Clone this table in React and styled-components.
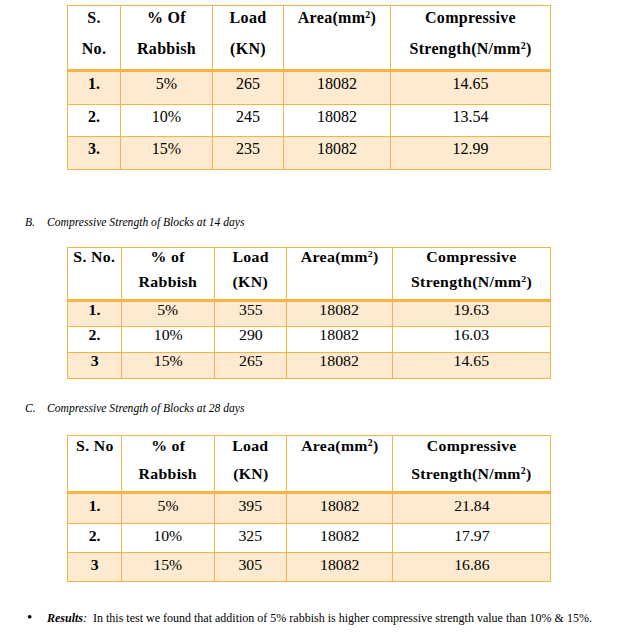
import styled, { createGlobalStyle } from "styled-components";

const BORDER = "#f6b444";
const SHADE = "#fdead0";

const GlobalStyle = createGlobalStyle`
  html, body {
    margin: 0;
    padding: 0;
    background: #ffffff;
  }
  body {
    font-family: "Liberation Serif", "Times New Roman", serif;
    color: #000000;
  }
`;

const Page = styled.div`
  width: 631px;
  padding-top: 5px;
  display: flex;
  flex-direction: column;
`;

const Grid = styled.div`
  display: grid;
  grid-template-columns: ${(p) => p.$cols};
  grid-template-rows: ${(p) => p.$rows};
  width: max-content;
  margin-left: 67px;
  margin-top: ${(p) => p.$top || 0}px;
  border-top: 1px solid ${BORDER};
  border-left: 1px solid ${BORDER};
`;

const Cell = styled.div`
  box-sizing: border-box;
  border-right: 1px solid ${BORDER};
  border-bottom: 1px solid ${BORDER};
  background: ${(p) => (p.$shade ? SHADE : "#ffffff")};
  text-align: center;
  padding-top: ${(p) => p.$pad}px;
  font-size: ${(p) => p.$size}px;
  font-weight: ${(p) => (p.$bold ? 700 : 400)};
  line-height: ${(p) => p.$lh}px;
  white-space: nowrap;
`;

const HeadCell = styled(Cell)`
  font-weight: 700;
  border-bottom: 3px solid ${BORDER};
  letter-spacing: 0.3px;
`;

const HeadLine = styled.div`
  height: ${(p) => p.$h}px;
`;

const Stretch = styled.span`
  display: inline-block;
  transform: scaleX(${(p) => p.$scale});
`;

const Sup = styled.sup`
  font-size: 0.62em;
  line-height: 0;
  vertical-align: 0.55em;
`;

const Caption = styled.div`
  display: flex;
  margin-top: ${(p) => p.$top}px;
  padding-left: 25px;
  font-size: 11.6px;
  font-style: italic;
  line-height: 14px;
`;

const Label = styled.span`
  width: 22px;
`;

const Results = styled.div`
  display: flex;
  align-items: baseline;
  margin-top: 28px;
  padding-left: 27px;
  font-size: 12px;
  line-height: 14px;
`;

const Bullet = styled.span`
  width: 20px;
  font-size: 15px;
  line-height: 14px;
`;

const Strong = styled.span`
  font-weight: 700;
  font-style: italic;
`;

const area = (
  <>
    Area(mm<Sup>2</Sup>)
  </>
);
const strength = (
  <>
    Strength(N/mm<Sup>2</Sup>)
  </>
);

const tables = [
  {
    top: 0,
    cols: "53px 92px 71px 107px 160px",
    rows: "66px 33px 32px 33px",
    size: 16,
    scale: 1,
    lh: 20,
    lineH: 31,
    headPad: 2,
    rowPad: 2,
    head: [["S.", "No."], ["% Of", "Rabbish"], ["Load", "(KN)"], [area], ["Compressive", strength]],
    body: [
      ["1.", "5%", "265", "18082", "14.65"],
      ["2.", "10%", "245", "18082", "13.54"],
      ["3.", "15%", "235", "18082", "12.99"],
    ],
  },
  {
    caption: ["B.", "Compressive Strength of Blocks at 14 days"],
    capTop: 46,
    top: 17,
    cols: "54px 93px 72px 106px 158px",
    rows: "54px 25px 26px 26px",
    size: 14.5,
    scale: 1.09,
    lh: 16,
    lineH: 25,
    headPad: 1,
    rowPad: 0,
    head: [["S. No."], ["% of", "Rabbish"], ["Load", "(KN)"], [area], ["Compressive", strength]],
    body: [
      ["1.", "5%", "355", "18082", "19.63"],
      ["2.", "10%", "290", "18082", "16.03"],
      ["3", "15%", "265", "18082", "14.65"],
    ],
  },
  {
    caption: ["C.", "Compressive Strength of Blocks at 28 days"],
    capTop: 23,
    top: 19,
    cols: "54px 93px 72px 106px 158px",
    rows: "58px 30px 29px 29px",
    size: 15,
    scale: 1.05,
    lh: 16,
    lineH: 28,
    headPad: 2,
    rowPad: 4,
    head: [["S. No"], ["% of", "Rabbish"], ["Load", "(KN)"], [area], ["Compressive", strength]],
    body: [
      ["1.", "5%", "395", "18082", "21.84"],
      ["2.", "10%", "325", "18082", "17.97"],
      ["3", "15%", "305", "18082", "16.86"],
    ],
  },
];

function DataTable({ t }) {
  return (
    <Grid $cols={t.cols} $rows={t.rows} $top={t.top}>
      {t.head.map((lines, i) => (
        <HeadCell key={"h" + i} $pad={t.headPad} $size={t.size} $lh={t.lh}>
          {lines.map((line, j) => (
            <HeadLine key={j} $h={t.lineH}>
              <Stretch $scale={t.scale}>{line}</Stretch>
            </HeadLine>
          ))}
        </HeadCell>
      ))}
      {t.body.map((row, r) =>
        row.map((val, c) => (
          <Cell
            key={r + "-" + c}
            $shade={r % 2 === 0}
            $bold={c === 0}
            $pad={t.rowPad}
            $size={t.size}
            $lh={t.lh}
          >
            <Stretch $scale={t.scale}>{val}</Stretch>
          </Cell>
        ))
      )}
    </Grid>
  );
}

export default function App() {
  return (
    <Page>
      <GlobalStyle />
      {tables.map((t, i) => (
        <div key={i}>
          {t.caption && (
            <Caption $top={t.capTop}>
              <Label>{t.caption[0]}</Label>
              <span>{t.caption[1]}</span>
            </Caption>
          )}
          <DataTable t={t} />
        </div>
      ))}
      <Results>
        <Bullet>•</Bullet>
        <span>
          <Strong>Results</Strong>
          <i>:</i>&nbsp;&nbsp;In this test we found that addition of 5% rabbish is higher
          compressive strength value than 10% &amp; 15%.
        </span>
      </Results>
    </Page>
  );
}
